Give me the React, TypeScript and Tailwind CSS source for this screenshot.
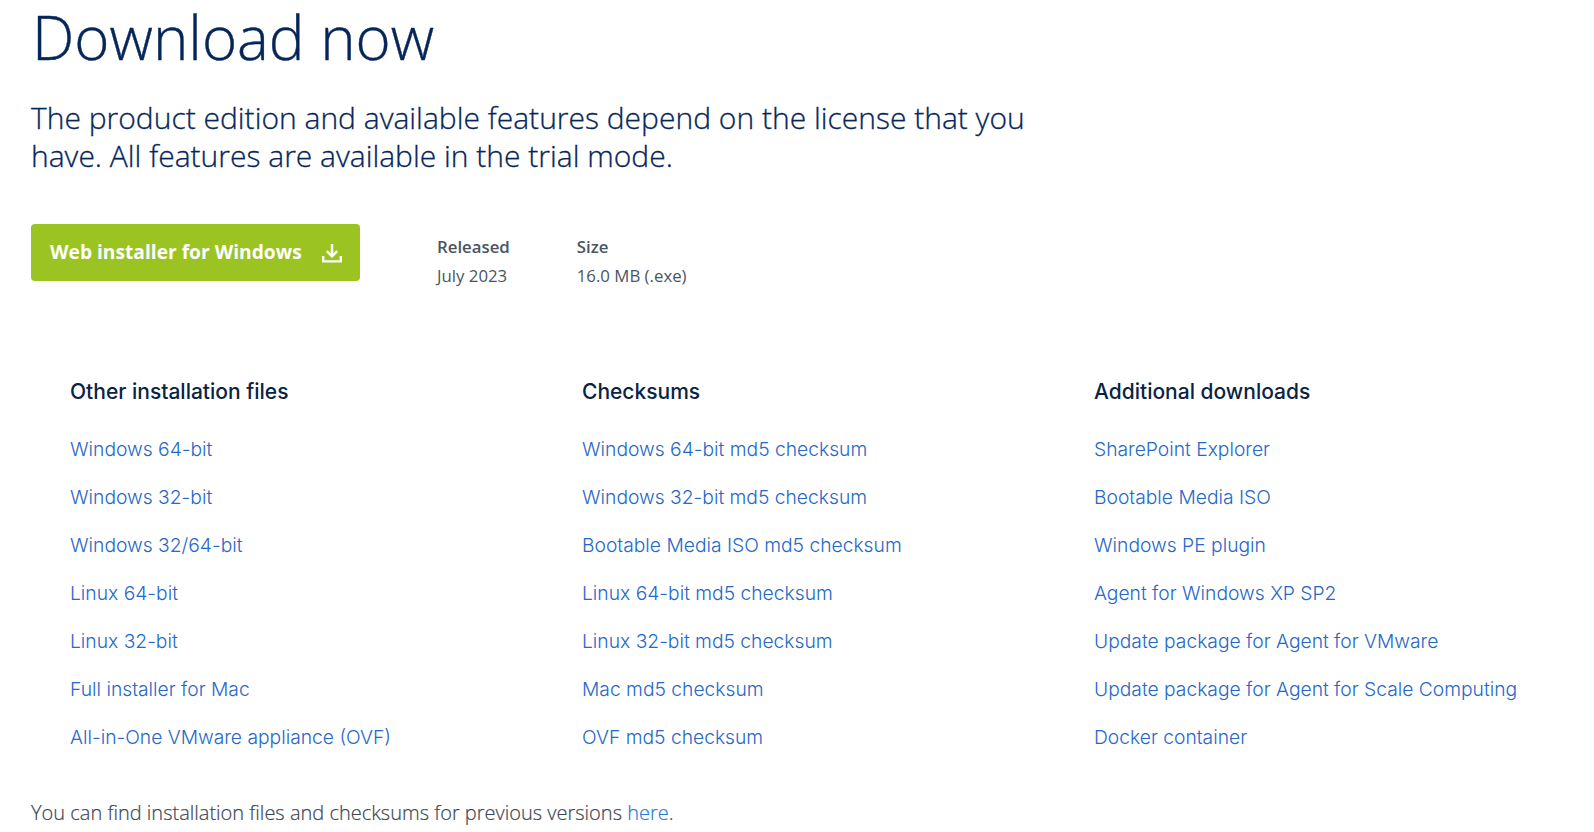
const columns = [
  {
    title: "Other installation files",
    links: ["Windows 64-bit", "Windows 32-bit", "Windows 32/64-bit", "Linux 64-bit", "Linux 32-bit", "Full installer for Mac", "All-in-One VMware appliance (OVF)"],
  },
  {
    title: "Checksums",
    links: ["Windows 64-bit md5 checksum", "Windows 32-bit md5 checksum", "Bootable Media ISO md5 checksum", "Linux 64-bit md5 checksum", "Linux 32-bit md5 checksum", "Mac md5 checksum", "OVF md5 checksum"],
  },
  {
    title: "Additional downloads",
    links: ["SharePoint Explorer", "Bootable Media ISO", "Windows PE plugin", "Agent for Windows XP SP2", "Update package for Agent for VMware", "Update package for Agent for Scale Computing", "Docker container"],
  },
]

function DownloadIcon() {
  return (
    <svg width="20" height="20" viewBox="0 0 20 20" fill="none" stroke="currentColor" strokeWidth="2.4" className="ml-[20px]">
      <path d="M10 1v12M4.8 8.2 10 13.4l5.2-5.2" />
      <path d="M1.2 13v5.4h17.6V13" />
    </svg>
  )
}

export default function App() {
  return (
    <div className="h-[832px] overflow-hidden bg-white font-['Open_Sans',sans-serif]">
      <h1 className="pl-[32px] text-[60px] font-light leading-[75px] text-[#06265a] [-webkit-text-stroke:0.4px]">Download now</h1>
      <p className="mt-[24px] w-[1040px] pl-[31px] text-[30px] font-light leading-[38px] text-[#06265a] [-webkit-text-stroke:0.3px]">
        The product edition and available features depend on the license that you have. All features are available in the trial mode.
      </p>

      <div className="mt-[49px] flex pl-[31px]">
        <button className="flex h-[57px] w-[329px] items-center rounded-[4px] bg-[#9bc423] pl-[19px] text-[19.2px] font-bold text-white">
          Web installer for Windows
          <DownloadIcon />
        </button>
        <div className="ml-[77px] mt-[8px] text-[16.8px] leading-[29px] text-[#4a5563]">
          <div className="font-semibold">Released</div>
          <div>July 2023</div>
        </div>
        <div className="ml-[67px] mt-[8px] text-[16.8px] leading-[29px] text-[#4a5563]">
          <div className="font-semibold">Size</div>
          <div>16.0 MB (.exe)</div>
        </div>
      </div>

      <div className="mt-[88px] grid grid-cols-[512px_512px_1fr] pl-[70px] font-['Inter',sans-serif]">
        {columns.map(col => (
          <div key={col.title}>
            <h3 className="text-[21px] font-medium leading-[28px] text-[#0a2345]">{col.title}</h3>
            <ul className="mt-[29px] flex flex-col gap-[20px]">
              {col.links.map(link => (
                <li key={link} className="text-[19.25px] font-light leading-[28px] text-[#2668c8]">{link}</li>
              ))}
            </ul>
          </div>
        ))}
      </div>

      <p className="mt-[48px] pl-[31px] text-[20px] font-light leading-[28px] text-[#3d4653] [-webkit-text-stroke:0.2px]">
        You can find installation files and checksums for previous versions <span className="text-[#2a7ad8]">here</span>.
      </p>
    </div>
  )
}
